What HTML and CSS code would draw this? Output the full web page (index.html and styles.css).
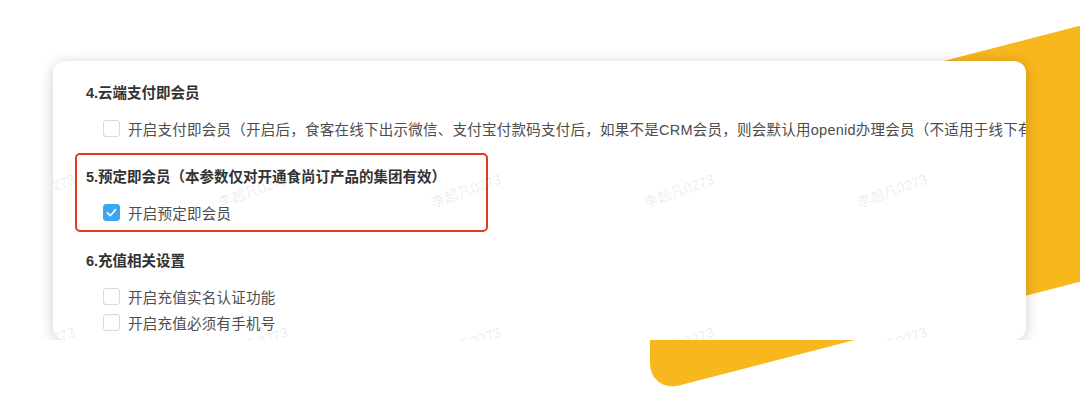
FILE: index.html
```html
<!DOCTYPE html>
<html lang="zh-CN">
<head>
    <meta charset="UTF-8">
    <meta name="viewport" content="width=device-width, initial-scale=1.0">
    <title>会员设置</title>
    <link rel="stylesheet" href="styles.css">
</head>
<body>
    <div class="backdrop"></div>

    <div class="page">
        <div class="card">
            <div class="section">
                <h3 class="section-title">4.云端支付即会员</h3>
                <label class="check-row">
                    <span class="checkbox"></span>
                    <span class="check-text">开启支付即会员（开启后，食客在线下出示微信、支付宝付款码支付后，如果不是CRM会员，则会默认用openid办理会员（不适用于线下有</span>
                </label>
            </div>

            <div class="section highlight">
                <h3 class="section-title">5.预定即会员（本参数仅对开通食尚订产品的集团有效）</h3>
                <label class="check-row">
                    <span class="checkbox checked">
                        <svg viewBox="0 0 16 16" width="13" height="13"><polyline points="3,8.5 6.5,12 13,4.5" fill="none" stroke="#fff" stroke-width="2" stroke-linecap="round" stroke-linejoin="round"/></svg>
                    </span>
                    <span class="check-text">开启预定即会员</span>
                </label>
            </div>

            <div class="section">
                <h3 class="section-title">6.充值相关设置</h3>
                <label class="check-row">
                    <span class="checkbox"></span>
                    <span class="check-text">开启充值实名认证功能</span>
                </label>
                <label class="check-row">
                    <span class="checkbox"></span>
                    <span class="check-text">开启充值必须有手机号</span>
                </label>
            </div>

            <!-- watermark layer -->
            <div class="watermarks">
                <span>李超凡0273</span><span>李超凡0273</span><span>李超凡0273</span><span>李超凡0273</span><span>李超凡0273</span>
                <span>李超凡0273</span><span>李超凡0273</span><span>李超凡0273</span><span>李超凡0273</span><span>李超凡0273</span>
            </div>
        </div>
    </div>
</body>
</html>
```

FILE: styles.css
```css
body {
    margin: 0;
    padding: 0;
    background-color: #fff;
    font-family: "Liberation Sans", "Noto Sans CJK SC", sans-serif;
    color: #333;
    overflow: hidden;
}
/* yellow slanted shape behind the card */
.backdrop {
    position: absolute;
    left: 650px;
    top: 137px;
    width: 600px;
    height: 256px;
    background-color: #f8b71d;
    border-bottom-left-radius: 30px;
    transform-origin: 0 0;
    transform: skewY(-14.5deg);
}
.page {
    position: relative;
    padding: 61px 0 0 53px;
}
.card {
    position: relative;
    width: 973px;
    height: 279px;
    box-sizing: border-box;
    padding: 22px 0 0 33px;
    background-color: #fff;
    border-radius: 12px;
    box-shadow: 0 2px 14px rgba(0, 0, 0, 0.2);
    overflow: hidden;
}
.section {
    margin-bottom: 26px;
}
.section-title {
    margin: 0 0 12px;
    font-size: 14.5px;
    font-weight: bold;
    line-height: 20px;
    color: #333;
}
.check-row {
    display: flex;
    align-items: center;
    height: 26px;
    padding-left: 17px;
    white-space: nowrap;
}
.checkbox {
    flex: none;
    display: flex;
    align-items: center;
    justify-content: center;
    width: 17px;
    height: 17px;
    box-sizing: border-box;
    border: 1px solid #d9d9d9;
    border-radius: 3px;
    background-color: #fff;
    margin-right: 8px;
}
.checkbox.checked {
    background-color: #3aa6ef;
    border-color: #3aa6ef;
}
.check-text {
    font-size: 14.5px;
    letter-spacing: 0.25px;
    color: #4d4d4d;
}
/* red annotation frame */
.highlight {
    position: relative;
}
.highlight::after {
    content: "";
    position: absolute;
    left: -11px;
    top: -14px;
    width: 413px;
    height: 79px;
    box-sizing: border-box;
    border: 2.5px solid #e23a1f;
    border-radius: 5px;
}
.watermarks {
    position: absolute;
    left: -120px;
    top: 52px;
    display: grid;
    grid-template-columns: repeat(5, 213px);
    grid-auto-rows: 153px;
    pointer-events: none;
}
.watermarks span {
    display: flex;
    align-items: center;
    justify-content: center;
    font-size: 14px;
    color: rgba(0, 0, 0, 0.09);
    transform: rotate(-20deg);
    white-space: nowrap;
}
```
